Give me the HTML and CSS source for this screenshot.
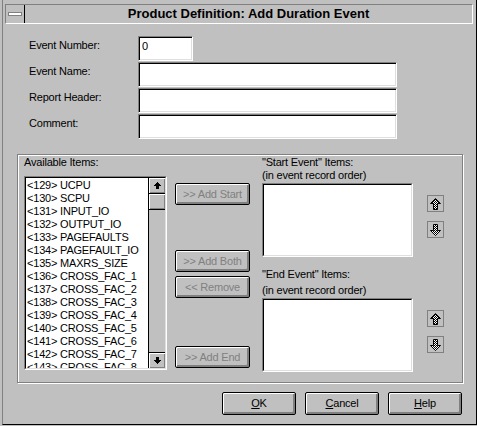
FILE: index.html
```html
<!DOCTYPE html>
<html>
<head>
	<title>Product Definition: Add Duration Event</title>
	<link rel="stylesheet" href="styles.css">
</head>
<body>

	<div class="frame">
		<div class="titlebar">
			<div class="sysmenu"><div class="bar"></div></div>
			<div class="title">Product Definition: Add Duration Event</div>
		</div>

		<div class="form">
			<div class="row"><div class="lbl">Event Number:</div><div class="edit short">0</div></div>
			<div class="row"><div class="lbl">Event Name:</div><div class="edit"></div></div>
			<div class="row"><div class="lbl">Report Header:</div><div class="edit"></div></div>
			<div class="row"><div class="lbl">Comment:</div><div class="edit"></div></div>
		</div>

		<div class="group">
			<div class="avail">
				<div class="cap">Available Items:</div>
				<div class="sunken listbox">
					<div class="in">
						<div class="items">
							<div>&lt;129&gt; UCPU</div>
							<div>&lt;130&gt; SCPU</div>
							<div>&lt;131&gt; INPUT_IO</div>
							<div>&lt;132&gt; OUTPUT_IO</div>
							<div>&lt;133&gt; PAGEFAULTS</div>
							<div>&lt;134&gt; PAGEFAULT_IO</div>
							<div>&lt;135&gt; MAXRS_SIZE</div>
							<div>&lt;136&gt; CROSS_FAC_1</div>
							<div>&lt;137&gt; CROSS_FAC_2</div>
							<div>&lt;138&gt; CROSS_FAC_3</div>
							<div>&lt;139&gt; CROSS_FAC_4</div>
							<div>&lt;140&gt; CROSS_FAC_5</div>
							<div>&lt;141&gt; CROSS_FAC_6</div>
							<div>&lt;142&gt; CROSS_FAC_7</div>
							<div>&lt;143&gt; CROSS_FAC_8</div>
						</div>
						<div class="sb">
							<div class="sbbtn up">
								<svg width="7" height="7" viewBox="0 0 7 7" shape-rendering="crispEdges"><rect x="3" y="0" width="1" height="1"/><rect x="2" y="1" width="3" height="1"/><rect x="1" y="2" width="5" height="1"/><rect x="0" y="3" width="7" height="1"/><rect x="2" y="4" width="3" height="3"/></svg>
							</div>
							<div class="thumb"></div>
							<div class="track"></div>
							<div class="sbbtn down">
								<svg width="7" height="7" viewBox="0 0 7 7" shape-rendering="crispEdges"><rect x="2" y="0" width="3" height="3"/><rect x="0" y="3" width="7" height="1"/><rect x="1" y="4" width="5" height="1"/><rect x="2" y="5" width="3" height="1"/><rect x="3" y="6" width="1" height="1"/></svg>
							</div>
						</div>
					</div>
				</div>
			</div>

			<div class="mid">
				<div class="btn off b-start">&gt;&gt; Add Start</div>
				<div class="btn off b-both">&gt;&gt; Add Both</div>
				<div class="btn off b-remove">&lt;&lt; Remove</div>
				<div class="btn off b-end">&gt;&gt; Add End</div>
			</div>

			<div class="picked">
				<div class="cap">&quot;Start Event&quot; Items:<br>(in event record order)</div>
				<div class="pickrow">
					<div class="sunken pbox"><div class="in"></div></div>
					<div class="movers">
						<div class="mv"><svg width="11" height="12" viewBox="0 0 11 12"><defs><pattern id="chk1" width="2" height="2" patternUnits="userSpaceOnUse"><rect width="2" height="2" fill="#fff"/><rect width="1" height="1" fill="#000"/><rect x="1" y="1" width="1" height="1" fill="#000"/></pattern></defs><polygon points="5.5,0.5 10.5,5.5 7.5,5.5 7.5,11.5 3.5,11.5 3.5,5.5 0.5,5.5" fill="url(#chk1)" stroke="#000"/></svg></div>
						<div class="mv"><svg width="11" height="12" viewBox="0 0 11 12"><defs><pattern id="chk2" width="2" height="2" patternUnits="userSpaceOnUse"><rect width="2" height="2" fill="#fff"/><rect width="1" height="1" fill="#000"/><rect x="1" y="1" width="1" height="1" fill="#000"/></pattern></defs><polygon points="3.5,0.5 7.5,0.5 7.5,6.5 10.5,6.5 5.5,11.5 0.5,6.5 3.5,6.5" fill="url(#chk2)" stroke="#000"/></svg></div>
					</div>
				</div>

				<div class="cap cap-end">&quot;End Event&quot; Items:</div>
				<div class="cap cap-sub">(in event record order)</div>
				<div class="pickrow">
					<div class="sunken pbox"><div class="in"></div></div>
					<div class="movers">
						<div class="mv"><svg width="11" height="12" viewBox="0 0 11 12"><defs><pattern id="chk3" width="2" height="2" patternUnits="userSpaceOnUse"><rect width="2" height="2" fill="#fff"/><rect width="1" height="1" fill="#000"/><rect x="1" y="1" width="1" height="1" fill="#000"/></pattern></defs><polygon points="5.5,0.5 10.5,5.5 7.5,5.5 7.5,11.5 3.5,11.5 3.5,5.5 0.5,5.5" fill="url(#chk3)" stroke="#000"/></svg></div>
						<div class="mv"><svg width="11" height="12" viewBox="0 0 11 12"><defs><pattern id="chk4" width="2" height="2" patternUnits="userSpaceOnUse"><rect width="2" height="2" fill="#fff"/><rect width="1" height="1" fill="#000"/><rect x="1" y="1" width="1" height="1" fill="#000"/></pattern></defs><polygon points="3.5,0.5 7.5,0.5 7.5,6.5 10.5,6.5 5.5,11.5 0.5,6.5 3.5,6.5" fill="url(#chk4)" stroke="#000"/></svg></div>
					</div>
				</div>
			</div>
		</div>

		<div class="actions">
			<div class="btn"><span><u>O</u>K</span></div>
			<div class="btn"><span><u>C</u>ancel</span></div>
			<div class="btn"><span><u>H</u>elp</span></div>
		</div>
	</div>

</body>
</html>
```

FILE: styles.css
```css
body {
	margin: 0;
	background-color: #c0c0c0;
	font-family: "Liberation Sans", Arial, sans-serif;
	font-size: 11px;
	letter-spacing: -0.2px;
	color: #000;
}

.frame {
	width: 475px;
	height: 425px;
	margin-left: 2px;
	box-sizing: border-box;
	border-left: 1px solid #808080;
	border-right: 1px solid #000;
	border-bottom: 1px solid #000;
	padding-top: 4px;
}

.titlebar {
	height: 20px;
	box-sizing: border-box;
	margin: 0 3px 0 2px;
	border-top: 1px solid #808080;
	border-left: 1px solid #808080;
	border-bottom: 1px solid #fff;
	border-right: 1px solid #fff;
	display: flex;
}

.sysmenu {
	width: 18px;
	border-right: 1px solid #000;
	display: flex;
	align-items: center;
	justify-content: center;
}

.bar {
	width: 12px;
	height: 2px;
	background-color: #fff;
	border: 1px solid #808080;
}

.title {
	flex: 1;
	text-align: center;
	font-weight: bold;
	font-size: 13px;
	letter-spacing: 0;
	line-height: 18px;
}

/* top fields */
.form {
	margin-top: 12px;
	padding-left: 26px;
}

.row {
	display: flex;
	height: 25px;
	margin-bottom: 1px;
}

.lbl {
	width: 109px;
	padding-top: 3px;
	line-height: 13px;
}

.edit {
	box-sizing: border-box;
	width: 259px;
	height: 25px;
	background-color: #fff;
	border: 1px solid;
	border-color: #808080 #fff #fff #808080;
	box-shadow: inset 1px 1px #000, inset -1px -1px #dfdfdf;
	padding: 3px 0 0 3px;
	line-height: 13px;
}

.edit.short {
	width: 55px;
}

/* group box */
.group {
	margin: 15px 0 0 14px;
	width: 446px;
	height: 229px;
	box-sizing: border-box;
	border: 1px solid #808080;
	box-shadow: inset 1px 1px #fff, 1px 1px #fff;
	padding: 1px 0 0 6px;
	display: flex;
}

.cap {
	line-height: 13px;
}

.listbox {
	margin-top: 7px;
	width: 143px;
	height: 194px;
}

.sunken {
	box-sizing: border-box;
	border: 1px solid;
	border-color: #808080 #fff #fff #808080;
}

.sunken > .in {
	box-sizing: border-box;
	height: 100%;
	border: 1px solid;
	border-color: #000 #dfdfdf #dfdfdf #000;
	background-color: #fff;
	display: flex;
}

.items {
	flex: 1;
	overflow: hidden;
	padding: 1px 0 0 1px;
	line-height: 13px;
	white-space: nowrap;
}

.sb {
	width: 16px;
	border-left: 1px solid #000;
	background-color: #c0c0c0;
	display: flex;
	flex-direction: column;
}

.sbbtn, .thumb {
	height: 16px;
	box-sizing: border-box;
	background-color: #c0c0c0;
	box-shadow: inset 1px 1px #fff, inset -1px -1px #808080;
	display: flex;
	align-items: center;
	justify-content: center;
}

.sbbtn.up, .thumb {
	border-bottom: 1px solid #000;
}

.sbbtn.down {
	border-top: 1px solid #000;
}

.track {
	flex: 1;
}

/* middle buttons */
.mid {
	margin-left: 8px;
	display: flex;
	flex-direction: column;
}

.btn {
	box-sizing: border-box;
	width: 75px;
	height: 22px;
	border: 1px solid #000;
	border-radius: 2px;
	background-color: #c0c0c0;
	box-shadow: inset 1px 1px #fff, inset -2px -2px #808080;
	display: flex;
	align-items: center;
	justify-content: center;
	padding-bottom: 1px;
}

.btn.off {
	color: #808080;
}

.b-start { margin-top: 27px; }
.b-both { margin-top: 45px; }
.b-remove { margin-top: 4px; }
.b-end { margin-top: 48px; }

/* picked lists */
.picked {
	margin-left: 12px;
}

.pickrow {
	display: flex;
	margin-top: 1px;
}

.pbox {
	width: 151px;
	height: 74px;
}

.movers {
	margin-left: 14px;
	padding-top: 12px;
	display: flex;
	flex-direction: column;
	gap: 9px;
}

.mv {
	width: 17px;
	height: 17px;
	box-sizing: border-box;
	border: 1px solid #808080;
	display: flex;
	align-items: center;
	justify-content: center;
}

.cap-end {
	margin-top: 11px;
}

.cap-sub {
	margin-top: 3px;
}

/* bottom buttons */
.actions {
	margin: 9px 0 0 219px;
	display: flex;
	gap: 9px;
}

.actions .btn {
	width: 74px;
	height: 23px;
}
```
